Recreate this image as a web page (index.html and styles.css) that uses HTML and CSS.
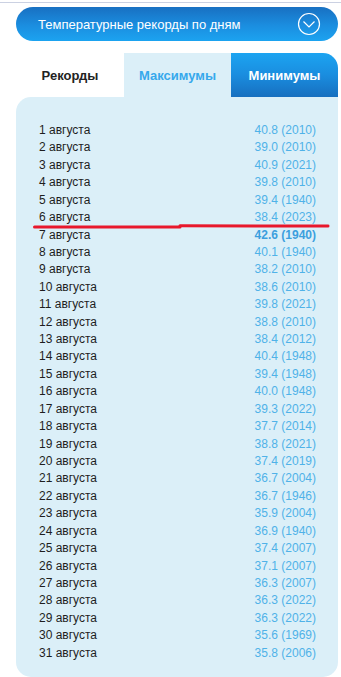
FILE: index.html
```html
<!DOCTYPE html>
<html lang="ru">
<head>
<meta charset="utf-8">
<link rel="stylesheet" href="styles.css">
</head>
<body>
<div class="topline"></div>
<div class="header">
  <span class="header-title">Температурные рекорды по дням</span>
  <svg class="header-icon" width="24" height="24" viewBox="0 0 24 24">
    <circle cx="12" cy="12" r="10.5" fill="none" stroke="#fff" stroke-width="1.2"/>
    <polyline points="6.5,9.5 12,15 17.5,9.5" fill="none" stroke="#fff" stroke-width="1.2"/>
  </svg>
</div>
<div class="tabs">
  <div class="tab tab-records">Рекорды</div>
  <div class="tab tab-max">Максимумы</div>
  <div class="tab tab-min">Минимумы</div>
</div>
<div class="panel">
  <ul class="rows">
    <li class="row"><span class="day">1 августа</span><span class="val">40.8 (2010)</span></li>
    <li class="row"><span class="day">2 августа</span><span class="val">39.0 (2010)</span></li>
    <li class="row"><span class="day">3 августа</span><span class="val">40.9 (2021)</span></li>
    <li class="row"><span class="day">4 августа</span><span class="val">39.8 (2010)</span></li>
    <li class="row"><span class="day">5 августа</span><span class="val">39.4 (1940)</span></li>
    <li class="row"><span class="day">6 августа</span><span class="val">38.4 (2023)</span></li>
    <li class="row"><span class="day">7 августа</span><span class="val val-bold">42.6 (1940)</span></li>
    <li class="row"><span class="day">8 августа</span><span class="val">40.1 (1940)</span></li>
    <li class="row"><span class="day">9 августа</span><span class="val">38.2 (2010)</span></li>
    <li class="row"><span class="day">10 августа</span><span class="val">38.6 (2010)</span></li>
    <li class="row"><span class="day">11 августа</span><span class="val">39.8 (2021)</span></li>
    <li class="row"><span class="day">12 августа</span><span class="val">38.8 (2010)</span></li>
    <li class="row"><span class="day">13 августа</span><span class="val">38.4 (2012)</span></li>
    <li class="row"><span class="day">14 августа</span><span class="val">40.4 (1948)</span></li>
    <li class="row"><span class="day">15 августа</span><span class="val">39.4 (1948)</span></li>
    <li class="row"><span class="day">16 августа</span><span class="val">40.0 (1948)</span></li>
    <li class="row"><span class="day">17 августа</span><span class="val">39.3 (2022)</span></li>
    <li class="row"><span class="day">18 августа</span><span class="val">37.7 (2014)</span></li>
    <li class="row"><span class="day">19 августа</span><span class="val">38.8 (2021)</span></li>
    <li class="row"><span class="day">20 августа</span><span class="val">37.4 (2019)</span></li>
    <li class="row"><span class="day">21 августа</span><span class="val">36.7 (2004)</span></li>
    <li class="row"><span class="day">22 августа</span><span class="val">36.7 (1946)</span></li>
    <li class="row"><span class="day">23 августа</span><span class="val">35.9 (2004)</span></li>
    <li class="row"><span class="day">24 августа</span><span class="val">36.9 (1940)</span></li>
    <li class="row"><span class="day">25 августа</span><span class="val">37.4 (2007)</span></li>
    <li class="row"><span class="day">26 августа</span><span class="val">37.1 (2007)</span></li>
    <li class="row"><span class="day">27 августа</span><span class="val">36.3 (2007)</span></li>
    <li class="row"><span class="day">28 августа</span><span class="val">36.3 (2022)</span></li>
    <li class="row"><span class="day">29 августа</span><span class="val">36.3 (2022)</span></li>
    <li class="row"><span class="day">30 августа</span><span class="val">35.6 (1969)</span></li>
    <li class="row"><span class="day">31 августа</span><span class="val">35.8 (2006)</span></li>
  </ul>
  <svg class="redline" width="300" height="8" viewBox="0 0 300 8">
    <path d="M2.5 5 L148 5" stroke="#e8182c" stroke-width="3" stroke-linecap="round" fill="none"/>
    <path d="M148 3.8 L296 4" stroke="#e8182c" stroke-width="3" stroke-linecap="round" fill="none"/>
  </svg>
</div>
</body>
</html>
```

FILE: styles.css
```css
html, body {
  margin: 0;
  padding: 0;
  background: #ffffff;
}
body {
  font-family: "Liberation Sans", Arial, sans-serif;
  width: 341px;
  overflow: hidden;
}
.topline {
  margin-top: 2px;
  height: 1px;
  background: #cbd1e2;
}
.header {
  margin: 4px 3px 0 16px;
  height: 34px;
  border-radius: 17px;
  background: linear-gradient(to bottom, #1870c2 0%, #1b8ee0 55%, #1ca3f0 100%);
  display: flex;
  align-items: center;
  justify-content: space-between;
  padding: 0 17px 0 22px;
  box-sizing: border-box;
}
.header-title {
  color: #ffffff;
  font-size: 13px;
}
.header-icon {
  display: block;
}
.tabs {
  margin: 12px 3px 0 16px;
  display: grid;
  grid-template-columns: 108px 107px 107px;
  height: 44px;
}
.tab {
  display: flex;
  align-items: center;
  justify-content: center;
  font-size: 13px;
  font-weight: bold;
}
.tab-records {
  background: #ffffff;
  color: #222222;
}
.tab-max {
  background: #dbeff8;
  color: #36a8ec;
}
.tab-min {
  background: linear-gradient(to bottom, #1ca4f1 0%, #1a8ddf 50%, #176fbf 100%);
  color: #ffffff;
  border-top-right-radius: 15px;
}
.panel {
  position: relative;
  margin: 0 3px 0 16px;
  background: #dbeff8;
  border-radius: 15px 0 15px 15px;
  padding: 25px 22px 15px 23px;
}
.rows {
  list-style: none;
  margin: 0;
  padding: 0;
}
.row {
  display: flex;
  justify-content: space-between;
  height: 17.43px;
  line-height: 17.43px;
  font-size: 12px;
}
.day {
  color: #1e1e1e;
}
.val {
  color: #4fb2e8;
}
.val-bold {
  font-weight: bold;
  color: #3b9fde;
}
.redline {
  position: absolute;
  left: 16px;
  top: 125px;
  display: block;
}
```
